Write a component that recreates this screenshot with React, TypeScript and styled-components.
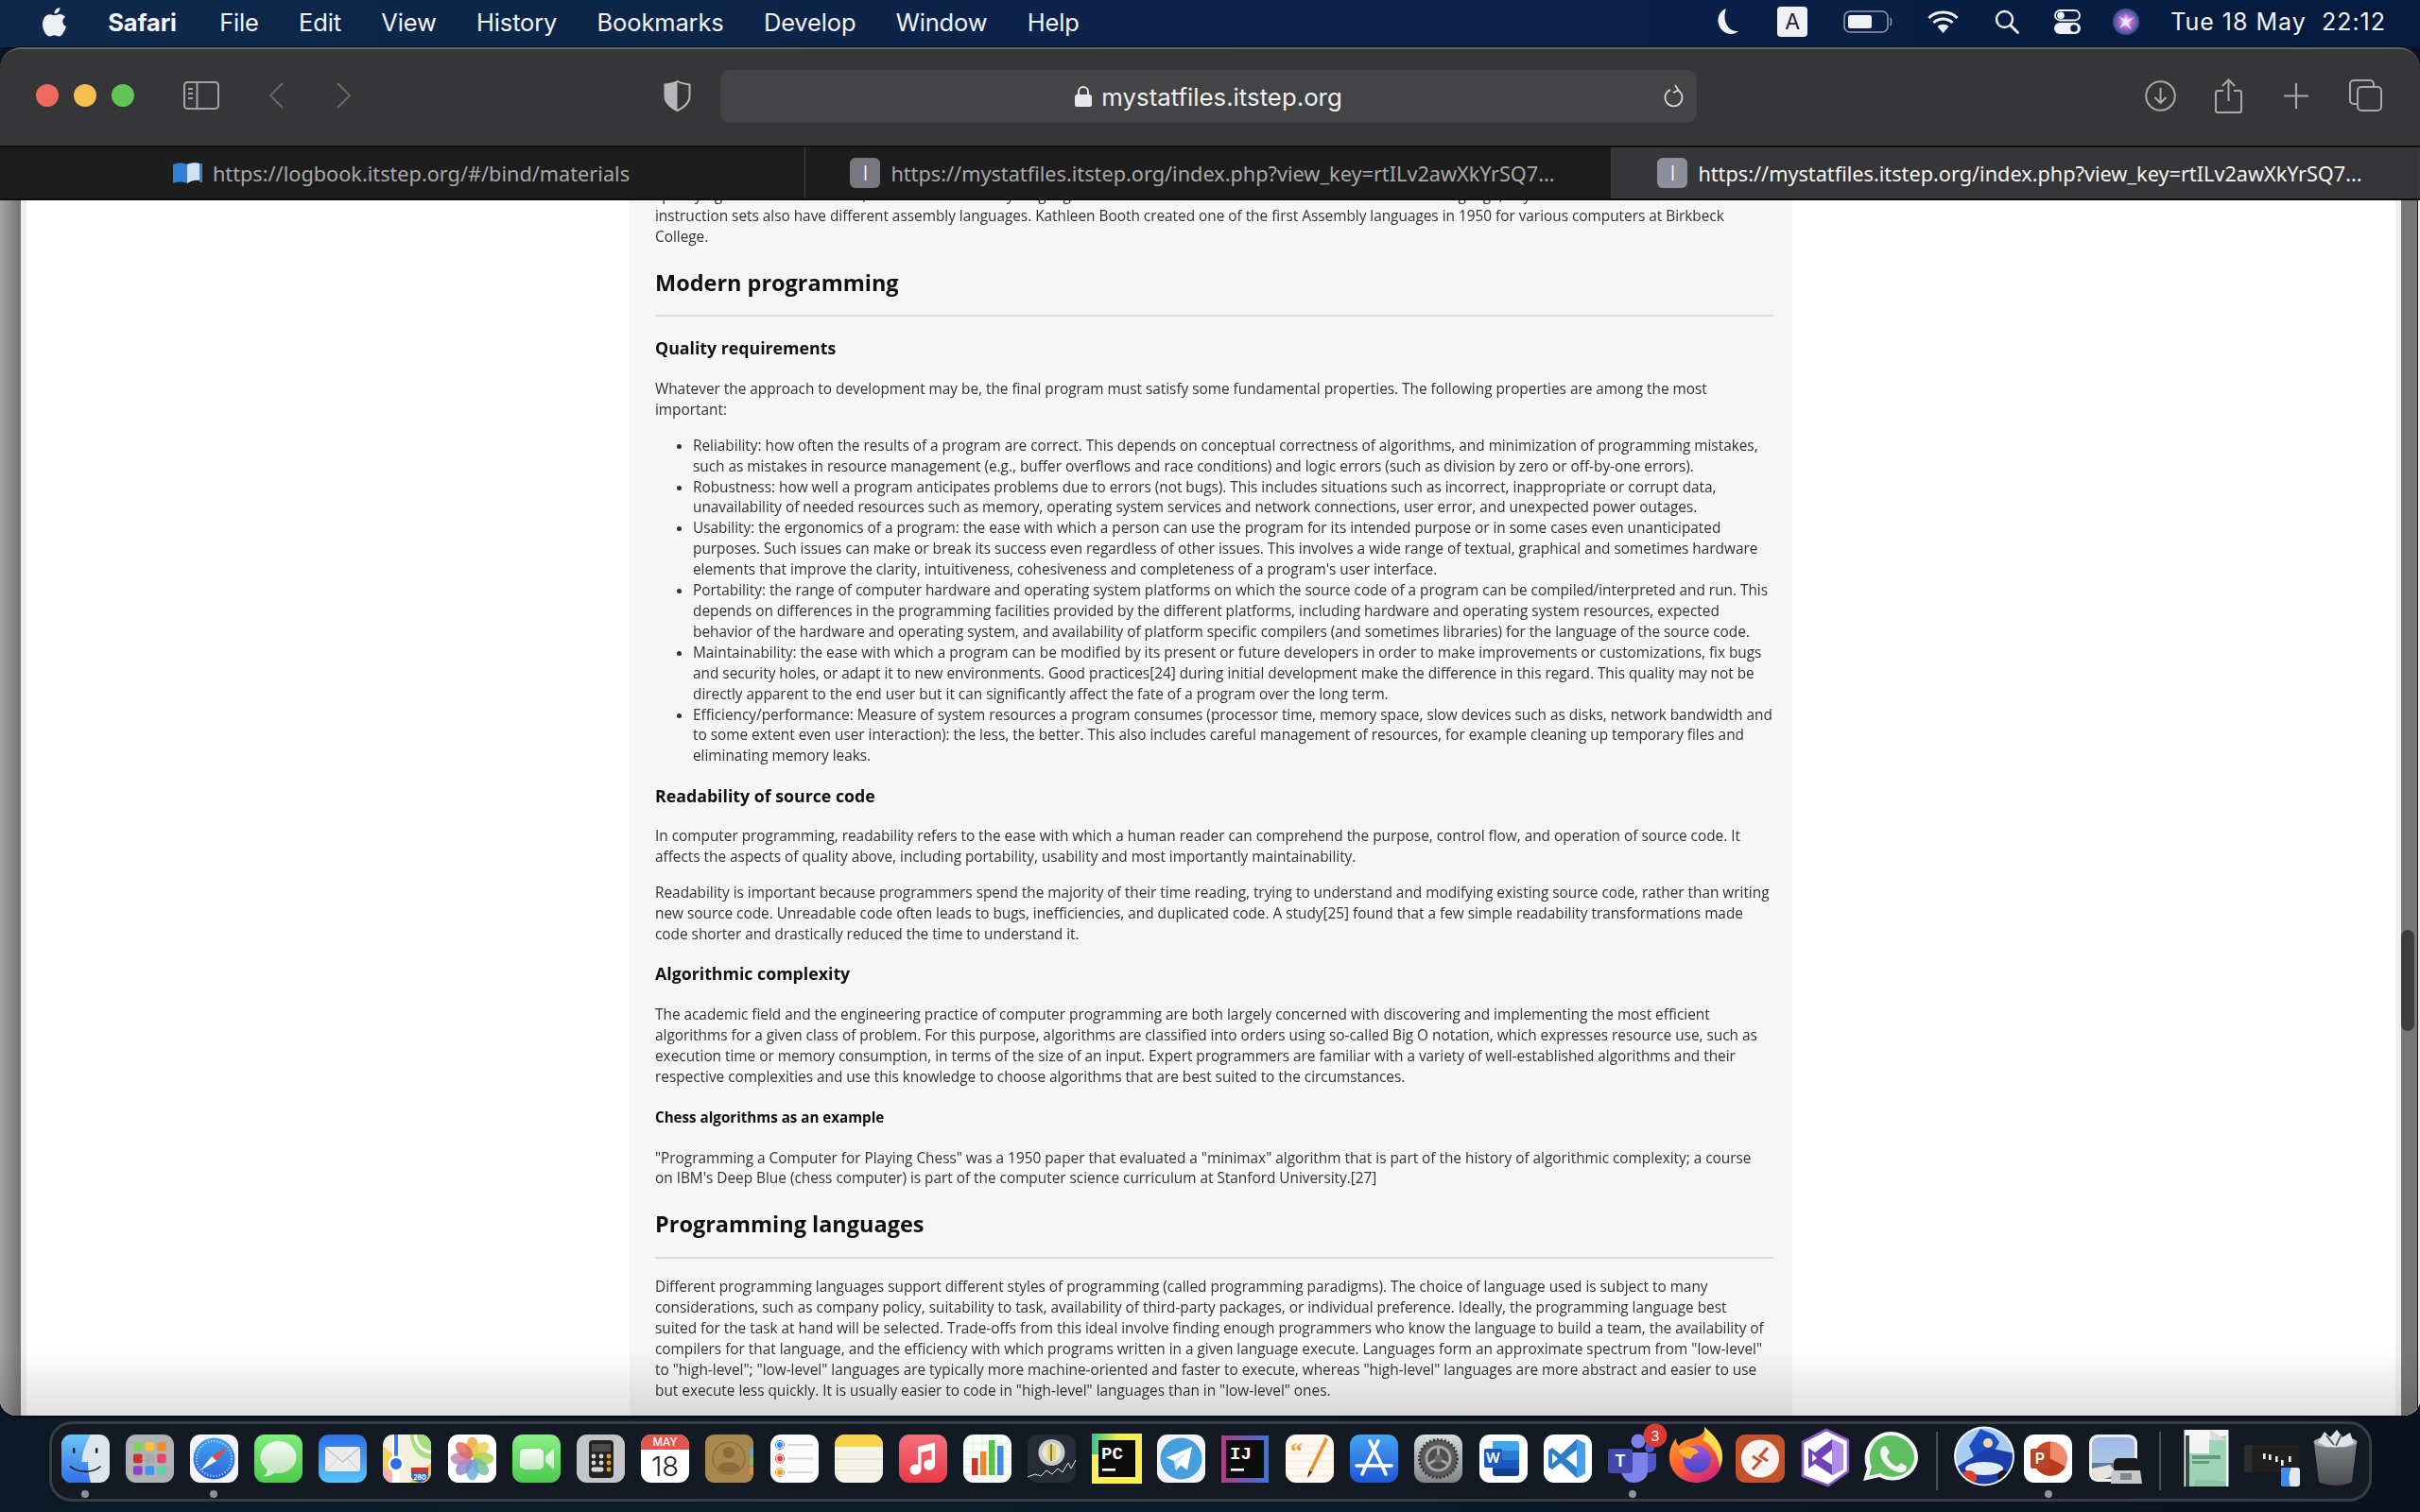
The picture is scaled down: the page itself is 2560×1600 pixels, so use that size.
import React from 'react';
import styled, { createGlobalStyle } from 'styled-components';

const Global = createGlobalStyle`
  html, body { margin: 0; padding: 0; background: #0a1521; }
  * { box-sizing: border-box; }
`;

const Screen = styled.div`
  width: 2560px; height: 1600px; overflow: hidden;
  display: flex; flex-direction: column;
  background: radial-gradient(ellipse at 30% 100%, #0d1c2b, #09131f 70%);
  font-family: Inter, "Liberation Sans", sans-serif;
`;
const MenuBar = styled.header`
  height: 50px; flex: none; display: flex; align-items: center; padding: 0 36px 4px 45px;
  background: linear-gradient(90deg, #10284c, #0b2148 60%, #051a3e);
  color: #f2f3f6; font-size: 25.5px; letter-spacing: -0.15px;
`;
const MenuLeft = styled.nav` display: flex; align-items: center; gap: 42.3px; `;
const AppName = styled.span` font-weight: 700; margin: 0 3px 0 24px; `;
const MenuItem = styled.span``;
const MenuRight = styled.div` margin-left: auto; display: flex; align-items: center; `;
const Clock = styled.span` white-space: pre; margin-left: 33px; font-size: 25px; letter-spacing: 1px; `;
const StatusIcon = styled.svg<{ $m: number }>` margin-left: ${p => p.$m}px; display: block; flex: none; `;
const InputBadge = styled.span`
  margin-left: 41px; width: 32px; height: 32px; flex: none; background: #eef0f4; border-radius: 4px;
  color: #16233d; font-size: 23px; text-align: center; line-height: 32px;
`;

const Win = styled.main`
  height: 1450px; flex: none; display: flex; flex-direction: column; overflow: hidden;
  border-radius: 22px 22px 18px 18px; border-top: 2px solid #626264; border-bottom: 2px solid #0a0a0a;
  background: #363638; box-shadow: 0 0 0 1px #101010;
`;
const Toolbar = styled.div`
  height: 102px; flex: none; display: flex; align-items: center; padding: 0 0 4px 38px; background: #363638;
`;
const Lights = styled.div` display: flex; gap: 16px; `;
const Light = styled.span<{ $c: string }>` width: 24px; height: 24px; border-radius: 50%; background: ${p => p.$c}; `;
const ToolIcon = styled.svg<{ $m: number }>` margin-left: ${p => p.$m}px; flex: none; display: block; `;
const UrlBar = styled.div`
  margin: 2px 0 0 31px; width: 1033px; height: 56px; border-radius: 11px; background: #444446;
  display: flex; align-items: center; justify-content: center; color: #f0f0f2; font-size: 25.8px; position: relative;
`;
const UrlLabel = styled.span` margin-left: 10px; `;
const Reload = styled.svg` position: absolute; right: 13px; top: 15px; `;
const TabBar = styled.div`
  height: 58px; flex: none; display: flex; background: #1d1d1e;
  border-top: 2px solid #111; border-bottom: 2px solid #0c0c0c;
`;
const Tab = styled.div<{ $w: number; $pad: number; $on?: boolean }>`
  width: ${p => p.$w}px; display: flex; align-items: center; justify-content: center; gap: 11px; padding-right: ${p => p.$pad}px;
  border-right: 1px solid #3c3c3e; font-size: 21.7px; white-space: nowrap; font-family: "Noto Sans", sans-serif;
  color: ${p => p.$on ? '#f4f4f5' : '#a8a8aa'}; background: ${p => p.$on ? '#363638' : 'transparent'};
`;
const Favicon = styled.span<{ $on?: boolean }>`
  width: 32px; height: 32px; border-radius: 6px; display: flex; align-items: center; justify-content: center;
  background: ${p => p.$on ? '#8d8e9c' : '#77777f'}; color: #fff; font-size: 21px; font-family: Inter, sans-serif; font-weight: 300;
`;
const Body = styled.div` flex: 1; display: flex; min-height: 0; position: relative; background: #fff; `;
const Gutter = styled.div` width: 22px; flex: none; background: linear-gradient(90deg, #a2a2a2, #757575); `;
const GutterEdge = styled.div` width: 6px; flex: none; background: #efefef; `;
const PageArea = styled.div` flex: 1; display: flex; justify-content: center; overflow: hidden; min-width: 0; `;
const Track = styled.div`
  width: 26px; flex: none; position: relative; display: flex;
  background: #efefef; padding-left: 6px;
`;
const TrackFill = styled.div` flex: 1; background: #777; border-right: 1px solid #1a1a1a; margin-right: 2px; `;
const Thumb = styled.div`
  position: absolute; left: 6px; top: 772px; width: 14px; height: 107px; border-radius: 7px; background: #3d3d3d;
`;
const Fade = styled.div`
  position: absolute; left: 0; right: 0; bottom: 0; height: 70px; pointer-events: none;
  background: linear-gradient(180deg, rgba(0,0,0,0), rgba(0,0,0,.12));
`;
const Panel = styled.article`
  width: 1230px; flex: none; background: #f6f6f6; padding: 0 20px 0 27px; overflow: hidden;
  font-family: "Open Sans", "Noto Sans", sans-serif; font-size: 15.4px; line-height: 21.9px; color: #323232;
  filter: blur(0.55px); white-space: nowrap; letter-spacing: -0.02px;
`;
const Scrolled = styled.div` margin-top: -16px; `;
const P = styled.p` margin: 0 0 16.2px; `;
const H2 = styled.h2`
  margin: 22px 0 19.5px; padding-bottom: 19.5px; border-bottom: 2px solid #dcdcdc;
  font-size: 23.5px; line-height: 30px; font-weight: 700; color: #111;
`;
const H3 = styled.h3<{ $first?: boolean }>`
  margin: ${p => p.$first ? 21 : 18.5}px 0 20.5px; font-size: 17.8px; line-height: 24px; font-weight: 700; color: #111;
`;
const H4 = styled.h4` margin: 19px 0 21px; font-size: 15.2px; line-height: 24px; font-weight: 700; color: #111; `;
const Ul = styled.ul` margin: 0; padding-left: 40px; `;
const Li = styled.li``;

const DockRow = styled.footer`
  margin: 4px 0 0 52px; width: 2457px; height: 85px; flex: none; display: flex; align-items: flex-start; gap: 17.2px;
  padding: 11px 0 0 9.5px; background: #131a24; border: 3px solid #383d45; border-radius: 24px;
`;
const DockItem = styled.div` width: 51px; height: 51px; flex: none; position: relative; `;
const DockSvg = styled.svg` display: block; overflow: visible; `;
const Running = styled.span`
  position: absolute; left: 21.5px; top: 59px; width: 8px; height: 8px; border-radius: 50%; background: #8f949b;
`;
const DockSep = styled.div` width: 2px; height: 62px; margin: -3px 6px 0; flex: none; background: #4a4e55; `;

const Lines = ({ t }: { t: string[] }) => <>{t.map((l, i) => <React.Fragment key={i}>{l}{i < t.length - 1 && <br />}</React.Fragment>)}</>;

const RR = ({ f, r = 11 }: { f: string; r?: number }) => <rect width="51" height="51" rx={r} fill={f} />;
const G = ({ id, a, b, c, h }: { id: string; a: string; b: string; c?: string; h?: boolean }) => (
  <linearGradient id={id} x1="0" y1="0" x2={h ? 1 : 0} y2={h ? 0 : 1}>
    <stop offset="0" stopColor={a} />{c && <stop offset=".5" stopColor={c} />}<stop offset="1" stopColor={b} />
  </linearGradient>
);

const petals = ['#f0a83a', '#e9d24a', '#a9cf57', '#6fbf9a', '#6aa7dd', '#8d86c9', '#c67fb2', '#e0655b'];
const lpad = ['#7bd84e', '#f6c33c', '#ee8e2e', '#cf2f27', '#a6aab0', '#e8476a', '#9440cf', '#3f97f2', '#5fd1ad'];

const icons: Record<string, React.ReactNode> = {
  finder: <><defs><G id="fa" a="#6cc6f8" b="#2f6fe8" /></defs><RR f="#dfe5ee" /><path d="M11 0 H31 C24 12 22 22 21.5 29 H28 C28 37 29 44 31 51 H11 A11 11 0 0 1 0 40 V11 A11 11 0 0 1 11 0Z" fill="url(#fa)" /><rect x="12" y="14" width="2.4" height="6" rx="1.2" fill="#1a1a1a" /><rect x="36" y="14" width="2.4" height="6" rx="1.2" fill="#1a1a1a" /><path d="M9.5 34 C18 41 33 41 41 34" fill="none" stroke="#111" strokeWidth="1.6" strokeLinecap="round" /></>,
  launch: <><RR f="#b1b2b6" />{lpad.map((c, i) => <rect key={i} x={8 + (i % 3) * 12.6} y={8 + Math.floor(i / 3) * 12.6} width="9.6" height="9.6" rx="2.2" fill={c} />)}</>,
  safari: <><defs><G id="sa" a="#3fa4f3" b="#2c64d6" /></defs><RR f="#f4f4f6" /><circle cx="25.5" cy="25.5" r="22" fill="url(#sa)" /><circle cx="25.5" cy="25.5" r="18.5" fill="none" stroke="#cfe3fa" strokeWidth="2" strokeDasharray="1 2.2" /><path d="M40 13 L23 23 L28 28Z" fill="#e5483e" /><path d="M11 38 L23 23 L28 28Z" fill="#f3f3f3" /></>,
  messages: <><defs><G id="ma" a="#7ff07a" b="#4cc94c" /><G id="mb" a="#f7fbf6" b="#bfe4bb" /></defs><RR f="url(#ma)" /><ellipse cx="25.5" cy="24" rx="19" ry="17" fill="url(#mb)" /><path d="M14 36 C14 40 12 43 9 44 C14 45 19 43 22 40Z" fill="#d4edd0" /></>,
  mail: <><defs><G id="la" a="#2e6fe8" b="#5ac3fb" /></defs><RR f="url(#la)" /><rect x="7" y="13" width="37" height="26" rx="2.5" fill="#ececec" /><path d="M7.5 14 L25.5 29 L43.5 14" fill="none" stroke="#b9bcc2" strokeWidth="1.2" /><path d="M8 38 L21 25 M43 38 L30 25" stroke="#c9ccd2" strokeWidth="1" /></>,
  maps: <><RR f="#f4eedd" /><path d="M29 0 H40 A11 11 0 0 1 51 11 V26 C38 26 29 14 29 0Z" fill="#a5e07e" /><path d="M34 0 C35 10 41 17 51 19" fill="none" stroke="#fff" strokeWidth="3" /><path d="M0 12 L12 22 L12 51 H11 A11 11 0 0 1 0 40Z" fill="#f6d35a" /><path d="M0 34 L12 42 V51 H11 A11 11 0 0 1 0 40Z" fill="#f2b3b8" /><path d="M28 51 L51 30 V40 A11 11 0 0 1 40 51Z" fill="#f4cf3d" /><rect x="10" y="0" width="8" height="51" fill="#fff" /><rect x="12" y="0" width="4" height="24" fill="#3b7de9" /><circle cx="14" cy="31" r="8.6" fill="#fff" /><circle cx="14" cy="31" r="6" fill="#2d6fe4" /><path d="M30 35 H48 V44 C48 48 42 50 39 51 C36 50 30 48 30 44Z" fill="#3465b6" /><rect x="30" y="35" width="18" height="5" fill="#d9352d" /><text x="39" y="48" fontSize="7" fontFamily="Inter" fontWeight="700" fill="#fff" textAnchor="middle">280</text></>,
  photos: <><RR f="#fff" />{petals.map((c, i) => <ellipse key={i} cx="25.5" cy="13.5" rx="6.6" ry="11" fill={c} opacity=".82" transform={`rotate(${i * 45} 25.5 25.5)`} />)}<circle cx="25.5" cy="25.5" r="1.2" fill="#fff" /></>,
  facetime: <><defs><G id="fta" a="#8bf088" b="#4cc84f" /><G id="ftb" a="#fafdf9" b="#c3e7bf" /></defs><RR f="url(#fta)" /><rect x="8" y="15" width="25" height="22" rx="5" fill="url(#ftb)" /><path d="M35 23 L44 15 V37 L35 29Z" fill="url(#ftb)" /></>,
  calc: <><RR f="#c3c5c8" /><rect x="13" y="6" width="26" height="40" rx="4" fill="#232323" /><rect x="16" y="10" width="20" height="8" rx="1" fill="#4b4b4b" />{[0, 1, 2, 3, 4, 5].map(i => <circle key={i} cx={18 + (i % 3) * 8} cy={23 + Math.floor(i / 3) * 7} r="2.4" fill={i % 3 === 2 ? '#f09a2e' : '#d6d6d6'} />)}<rect x="15.5" y="34.5" width="13" height="5" rx="2.5" fill="#d6d6d6" /><circle cx="34" cy="37" r="2.4" fill="#f09a2e" /></>,
  calendar: <><RR f="#fff" /><path d="M11 0 H40 A11 11 0 0 1 51 11 V16 H0 V11 A11 11 0 0 1 11 0Z" fill="#e0574d" /><text x="25.5" y="12" fontSize="11.5" fontFamily="Inter" fontWeight="500" fill="#fff" textAnchor="middle">MAY</text><text x="25.5" y="44" fontSize="29" fontFamily="Inter" fontWeight="300" fill="#222" textAnchor="middle">18</text></>,
  contacts: <><rect width="51" height="51" rx="9" fill="#a8884e" /><rect x="47" y="14" width="4" height="9" fill="#58a7d6" /><rect x="47" y="24" width="4" height="9" fill="#7bb96b" /><rect x="47" y="34" width="4" height="8" fill="#d99338" /><circle cx="25" cy="25" r="17" fill="none" stroke="#8a6d3b" strokeWidth="1.2" /><circle cx="25" cy="19" r="6" fill="#8a6d3b" /><path d="M13 36 C15 27 35 27 37 36 C31 42 19 42 13 36Z" fill="#8a6d3b" /></>,
  reminders: <><RR f="#fbfbfb" />{['#3b82f0', '#e2453c', '#ef9b2e'].map((c, i) => <React.Fragment key={i}><circle cx="10" cy={11 + i * 14.5} r="4.6" fill="none" stroke={c} strokeWidth="1" /><circle cx="10" cy={11 + i * 14.5} r="3" fill={c} /><rect x="18" y={10 + i * 14.5} width="27" height="1.8" fill="#d3d3d3" /></React.Fragment>)}</>,
  notes: <><RR f="#f6f3e9" /><path d="M11 0 H40 A11 11 0 0 1 51 11 V13 H0 V11 A11 11 0 0 1 11 0Z" fill="#f8d24a" /><path d="M0 26 H51 M0 38 H51" stroke="#dcd8ca" strokeWidth="1.2" /></>,
  music: <><defs><G id="mu" a="#f46f7e" b="#e93a49" /></defs><RR f="url(#mu)" /><path d="M20 13 L38 8.5 V32 A6 5.6 0 1 1 34.5 27 V16.5 L23.5 19 V37 A6 5.6 0 1 1 20 32Z" fill="#fff" /></>,
  numbers: <><RR f="#f8fbf7" /><path d="M0 10 H51 M0 18 H51 M0 26 H51 M0 34 H51 M0 42 H51 M10 0 V51 M20 0 V51 M30 0 V51 M40 0 V51" stroke="#d9ecd9" strokeWidth=".7" /><rect x="9" y="25" width="6.5" height="18" fill="#c8342c" /><rect x="18" y="18" width="6.5" height="25" fill="#ea8a2f" /><rect x="27" y="6" width="6.5" height="37" fill="#55c24a" /><rect x="36" y="12" width="6.5" height="31" fill="#3d8be6" /></>,
  stock: <><RR f="#262c37" /><circle cx="25.5" cy="19" r="14" fill="#c8c8c4" /><circle cx="25.5" cy="19" r="10" fill="#e6e6e0" /><path d="M21 11 H30 V27 H21Z" fill="#e9d860" /><path d="M25 10 V28" stroke="#777" strokeWidth="2" /><path d="M0 45 L8 42 L14 44 L20 38 L26 42 L32 36 L37 40 L43 30 L46 36 L51 27" fill="none" stroke="#e8e8e8" strokeWidth="1" /></>,
  pycharm: <><defs><G id="pa" a="#2fc48d" b="#ffed4f" c="#f0f04a" h /></defs><rect x="-1" y="-1" width="53" height="53" fill="#fcef50" /><rect x="-1" y="-1" width="53" height="22" fill="url(#pa)" /><rect x="6" y="6" width="39" height="39" fill="#0b0b0b" /><text x="9" y="26" fontSize="19" fontFamily="Liberation Mono" fontWeight="700" fill="#fff">PC</text><rect x="10" y="36" width="14" height="2.6" fill="#fff" /></>,
  telegram: <><RR f="#f2f2f2" /><circle cx="25.5" cy="25.5" r="22" fill="#46a0dd" /><path d="M37 13 L9.5 24.5 L18 28 L20 38 L25 32.5 L32 37.5Z" fill="#fff" /><path d="M18 28 L33 17 L22 29.5 L20 38Z" fill="#cfe3f3" /></>,
  idea: <><defs><G id="ib" a="#b13c7e" b="#3873e6" h /></defs><rect y="1" width="50" height="50" fill="url(#ib)" /><rect x="5" y="6" width="40" height="40" fill="#0b0b0b" /><text x="9" y="26" fontSize="19" fontFamily="Liberation Mono" fontWeight="700" fill="#fff">IJ</text><rect x="10" y="36" width="14" height="2.6" fill="#fff" /></>,
  pages: <><RR f="#fdf8ef" /><path d="M0 12 H51 M0 20 H51 M0 28 H51 M0 36 H51 M0 44 H51" stroke="#f6dcc5" strokeWidth=".8" /><text x="5" y="26" fontSize="26" fontFamily="Liberation Serif" fontWeight="700" fill="#f0983c">“</text><path d="M42 3 L45 5 L28 40 L23 46 L25 38Z" fill="#e8922d" /><path d="M28 40 L23 46 L25 38Z" fill="#333" /></>,
  appstore: <><defs><G id="aa" a="#46a6f3" b="#1f55d4" /></defs><RR f="url(#aa)" /><path d="M30 7 L17 33 M21 7 L34 33 M7 33 H44 M13 42 L17 33 M38 42 L34 33" stroke="#fff" strokeWidth="3.6" strokeLinecap="round" fill="none" /></>,
  settings: <><defs><G id="se" a="#d5dee0" b="#828486" /></defs><RR f="url(#se)" /><circle cx="25.5" cy="25.5" r="20" fill="#5a5a5c" /><circle cx="25.5" cy="25.5" r="20" fill="none" stroke="#39393a" strokeWidth="3" strokeDasharray="2 2" /><circle cx="25.5" cy="25.5" r="14" fill="#a4a5a7" /><circle cx="25.5" cy="25.5" r="11" fill="#4d4d4f" /><path d="M25.5 25.5 V14 M25.5 25.5 L35.5 31 M25.5 25.5 L15.5 31" stroke="#a4a5a7" strokeWidth="3" /><circle cx="25.5" cy="25.5" r="4" fill="#6a6a6c" /></>,
  word: <><RR f="#fff" /><path d="M14 7 H39 A3 3 0 0 1 42 10 V17 H14Z" fill="#41a5ee" /><rect x="14" y="17" width="28" height="10" fill="#2b7cd3" /><rect x="14" y="27" width="28" height="9" fill="#185abd" /><path d="M14 36 H42 V41 A3 3 0 0 1 39 44 H17 A3 3 0 0 1 14 41Z" fill="#103f91" /><rect x="5" y="15" width="19" height="20" rx="2" fill="#185abd" /><text x="14.5" y="30" fontSize="15" fontFamily="Inter" fontWeight="600" fill="#fff" textAnchor="middle">W</text></>,
  vscode: <><RR f="#fff" /><path d="M35 5 L44 9.5 V41 L35 46 L18 30 L9 37 L5 34.5 V16.5 L9 14 L18 21Z M35 16 L23.5 25.5 L35 35Z M9 20 V31 L15 25.5Z" fill="#2f7fc7" fillRule="evenodd" /><path d="M35 5 L44 9.5 V41 L35 46Z" fill="#4a9fe8" /></>,
  teams: <><circle cx="32" cy="7" r="7.5" fill="#7b83eb" /><circle cx="44" cy="14" r="5" fill="#5059c9" /><path d="M38 20 H51 V33 C51 38 46 41 42 40Z" fill="#5059c9" /><path d="M14 19 H42 V39 C42 47 34 51 27 51 C20 51 16 46 14 40Z" fill="#7b83eb" /><rect x="0" y="15" width="26" height="26" rx="3" fill="#4348ae" /><text x="13" y="34" fontSize="17" fontFamily="Inter" fontWeight="700" fill="#fff" textAnchor="middle">T</text><circle cx="50" cy="1" r="12.5" fill="#d93c35" /><text x="50" y="6.5" fontSize="15" fontFamily="Inter" fill="#fff" textAnchor="middle">3</text></>,
  firefox: <><defs><linearGradient id="ff" x1="0" y1="0" x2=".7" y2="1"><stop offset="0" stopColor="#ffb52e" /><stop offset=".5" stopColor="#fb6a2a" /><stop offset="1" stopColor="#d3247e" /></linearGradient><G id="fg" a="#a855d8" b="#3f45c8" /></defs><path d="M34 -8 C40 -2 52 6 53 22 C54 42 40 51 25 51 C10 51 -3 40 -3 24 C-3 14 1 8 4 4 C4 8 5 10 7 12 C10 7 16 5 22 4 C30 2 35 -2 34 -8Z" fill="url(#ff)" /><path d="M34 -8 C40 -2 52 6 53 22 C53 28 52 32 50 35 C50 20 38 8 32 6 C35 2 35 -3 34 -8Z" fill="#fddb4e" /><circle cx="26" cy="26" r="14.5" fill="url(#fg)" /><path d="M12 14 C18 12 26 14 28 19 C24 21 20 22 20 26 C15 26 9 22 6 17Z" fill="#ffab30" /></>,
  remote: <><rect x="-1" y="0" width="52" height="51" rx="10" fill="#c4522d" /><circle cx="25" cy="25.5" r="20" fill="#f7f4f2" /><path d="M33 14 L25 23 L33 28 M17 23 L25 28 L17 37" fill="none" stroke="#c4522d" strokeWidth="3" /></>,
  vs: <><path d="M26 -5 L49 6 V39 L28 54 L1 44 V8Z" fill="#fff" stroke="#8a5cc7" strokeWidth="2.6" strokeLinejoin="round" /><path d="M32 5 L44 11 V37 L32 43 L14 31 L7 36 V14 L14 19Z M32 16 L21 25 L32 32Z M11 20 V29 L16 25Z" fill="#6f42b8" fillRule="evenodd" /><path d="M32 5 L44 11 V37 L32 43Z" fill="#b18de8" /></>,
  whatsapp: <><path d="M-3 49 L1 36 C-7 18 7 -3 26 -3 C42 -3 55 10 55 24 C55 42 34 55 14 45Z" fill="#f3f3f3" /><path d="M3 44 L6 34 C-1 19 10 1 26 1 C40 1 51 12 51 24 C51 39 33 51 15 41Z" fill="#5fbd62" /><path d="M17 13 L21 12 L25 19 L22 23 C24 28 28 32 33 34 L37 30 L43 34 L42 38 C38 42 30 40 23 34 C16 28 13 19 17 13Z" fill="#f3f3f3" /></>,
  sonic: <><defs><clipPath id="so"><ellipse cx="26" cy="23" rx="30" ry="29.5" /></clipPath></defs><ellipse cx="26" cy="23" rx="32" ry="31.5" fill="#f5f5f5" /><g clipPath="url(#so)"><rect x="-6" y="-8" width="64" height="62" fill="#a9cdf2" /><path d="M10 12 L22 -6 L36 0 L42 8 L34 22 L16 26Z" fill="#1c50c4" /><circle cx="30" cy="9" r="5" fill="#f0d9b0" /><path d="M-6 36 L30 14 L58 20 L58 54 L-6 54Z" fill="#1d3ea8" /><ellipse cx="26" cy="36" rx="20" ry="7" fill="#e5ebf4" /><circle cx="10" cy="46" r="8" fill="#d8452a" /><circle cx="46" cy="44" r="6" fill="#1a1a1a" /></g></>,
  ppt: <><RR f="#fff" r={11} /><circle cx="28" cy="25.5" r="18" fill="#ee8d6e" /><path d="M28 25.5 V7.5 A18 18 0 0 0 11 31 Z" fill="#d04a28" /><path d="M28 25.5 H10 A18 18 0 0 0 44 34Z" fill="#b63c1c" /><rect x="7" y="15" width="20" height="21" rx="2" fill="#b7472a" /><text x="17" y="31" fontSize="16" fontFamily="Inter" fontWeight="600" fill="#fff" textAnchor="middle">P</text></>,
  preview: <><defs><G id="pv" a="#9db9e6" b="#b8cfe6" /></defs><rect x="0" y="0" width="51" height="50" rx="9" fill="#eee" /><rect x="3" y="3" width="45" height="44" rx="7" fill="url(#pv)" /><path d="M3 30 H48 V40 A7 7 0 0 1 41 47 H10 A7 7 0 0 1 3 40Z" fill="#5a7d9e" /><path d="M3 36 L22 32 L30 42 L16 47 H10 A7 7 0 0 1 3 40Z" fill="#e8e4dc" /><rect x="26" y="25" width="27" height="15" rx="5" fill="#1b1b1b" /><path d="M24 38 H54 L56 52 H23Z" fill="#c6c8ca" /><rect x="33" y="41" width="12" height="7" fill="#7a8793" /></>,
  doc: <><rect x="1.5" y="-5" width="47" height="60" fill="#f5f5f5" /><rect x="3" y="1" width="4" height="54" fill="#3e4a44" /><path d="M7 5 H30 L46 1 V55 H7Z" fill="#9fd3b6" /><path d="M7 5 H28 V20 H7Z" fill="#f3f3f3" /><path d="M29 -5 L46 6 L29 6Z" fill="#dcdcdc" /><rect x="10" y="22" width="30" height="4" fill="#5f9e7d" /><rect x="10" y="28" width="18" height="3" fill="#5f9e7d" /><path d="M12 48 H32 L46 50 V55 H12Z" fill="#8cc5a6" /></>,
  folder: <><rect x="-3" y="11" width="58" height="29" fill="#1f1f20" /><rect x="-3" y="11" width="8" height="29" fill="#2d2d2e" />{[[17, 20], [23, 21], [30, 23], [36, 27], [44, 23]].map((p, i) => <rect key={i} x={p[0]} y={p[1]} width="2.600" height="6" fill="#eee" />)}<rect x="36" y="35" width="20" height="20" rx="3" fill="#e5e9ef" /><path d="M39 35 H47 C44 41 44 48 46 55 H39 A3 3 0 0 1 36 52 V38 A3 3 0 0 1 39 35Z" fill="#3c8bef" /></>,
  trash: <><defs><G id="tr" a="#7f8083" b="#4a4b4d" /></defs><path d="M3 9 H48 L43 50 C36 55 15 55 8 50Z" fill="url(#tr)" /><ellipse cx="25.500" cy="8" rx="23" ry="6" fill="#a9acb2" /><path d="M7 8 L14 -3 L20 3 L27 -5 L33 3 L41 -2 L45 9 L36 13 L16 13Z" fill="#dfe3ea" /><path d="M16 1 L24 11 M32 0 L26 12" stroke="#5a5c60" strokeWidth="2" /></>,
};

const dock1 = ['finder', 'launch', 'safari', 'messages', 'mail', 'maps', 'photos', 'facetime', 'calc', 'calendar', 'contacts', 'reminders', 'notes', 'music', 'numbers', 'stock', 'pycharm', 'telegram', 'idea', 'pages', 'appstore', 'settings', 'word', 'vscode', 'teams', 'firefox', 'remote', 'vs', 'whatsapp'];
const dock2 = ['sonic', 'ppt', 'preview'];
const dock3 = ['doc', 'folder', 'trash'];
const running = new Set(['finder', 'safari', 'teams', 'ppt']);

const renderDock = (names: string[]) => names.map(n => (
  <DockItem key={n}>
    <DockSvg width="51" height="51" viewBox="0 0 51 51">{icons[n]}</DockSvg>
    {running.has(n) && <Running />}
  </DockItem>
));

const menu = ['File', 'Edit', 'View', 'History', 'Bookmarks', 'Develop', 'Window', 'Help'];

export default function App() {
  return (
    <Screen>
      <Global />
      <MenuBar>
        <MenuLeft>
          <StatusIcon $m={0} width="25" height="31" viewBox="0 0 25 31" style={{ marginRight: -22 }}>
            <path d="M18.5 0 C18.7 3.2 16 6.6 12.6 6.5 C12.2 3.3 15.1 0.3 18.5 0Z M12.5 8.2 C14.2 8.2 15.8 6.9 18.3 6.9 C20.5 6.9 22.6 8 24 10 C20 12.3 20.7 18.4 25 20.2 C23.7 23.8 20.8 30.5 17.6 30.5 C15.5 30.5 14.8 29.2 12.5 29.2 C10.1 29.2 9.3 30.5 7.3 30.5 C3.7 30.5 0 23.4 0 17.6 C0 11.4 3.8 7.2 7.6 7.2 C9.6 7.2 11 8.2 12.5 8.2Z" fill="#eceef2" />
          </StatusIcon>
          <AppName>Safari</AppName>
          {menu.map(m => <MenuItem key={m}>{m}</MenuItem>)}
        </MenuLeft>
        <MenuRight>
          <StatusIcon $m={0} width="26" height="30" viewBox="0 0 26 30"><path d="M13 1 C6 4 4 10 4.500 15 C5.500 23 12 28 18 28 C21 28 24 27 26 25 C16 26 8 15 13 1Z" fill="#f0f1f4" /></StatusIcon>
          <InputBadge>A</InputBadge>
          <StatusIcon $m={38} width="52" height="24" viewBox="0 0 52 24"><rect x="1" y="1" width="46" height="22" rx="6" fill="none" stroke="#8d97ab" strokeWidth="1.6" /><rect x="5" y="5" width="25" height="14" rx="2.500" fill="#eef0f4" /><path d="M49.500 8 C51 9 51 15 49.500 16" fill="none" stroke="#8d97ab" strokeWidth="1.6" /></StatusIcon>
          <StatusIcon $m={37} width="33" height="24" viewBox="0 0 33 24"><path d="M1.500 8 C9 0 24 0 31.500 8 M6.500 13 C12 7.500 21 7.500 26.500 13" fill="none" stroke="#f0f1f4" strokeWidth="3" /><path d="M10.500 17 C14 14 19 14 22.500 17 L16.500 24Z" fill="#f0f1f4" /></StatusIcon>
          <StatusIcon $m={38} width="26" height="26" viewBox="0 0 26 26"><circle cx="10.500" cy="10.500" r="8.500" fill="none" stroke="#f0f1f4" strokeWidth="2.400" /><path d="M17 17 L24.500 24.500" stroke="#f0f1f4" strokeWidth="2.800" strokeLinecap="round" /></StatusIcon>
          <StatusIcon $m={37} width="28" height="26" viewBox="0 0 28 26"><rect x="1" y="1" width="26" height="10.500" rx="5.200" fill="none" stroke="#f0f1f4" strokeWidth="1.800" /><circle cx="7" cy="6.200" r="3.800" fill="#f0f1f4" /><rect x="0" y="14" width="28" height="12" rx="6" fill="#f0f1f4" /><circle cx="21" cy="20" r="3.800" fill="#0b2148" /></StatusIcon>
          <StatusIcon $m={34} width="28" height="28" viewBox="0 0 28 28"><defs><radialGradient id="si"><stop offset="0" stopColor="#fff" /><stop offset=".45" stopColor="#b96ad8" /><stop offset="1" stopColor="#2d4f8c" /></radialGradient></defs><circle cx="14" cy="14" r="14" fill="url(#si)" /><path d="M14 5 L15 12 L23 9 L16 15 L20 23 L13.500 17 L7 21 L11.500 14 L6 8 L13 12Z" fill="#e8f2ff" opacity=".85" /></StatusIcon>
          <Clock>{'Tue 18 May  22:12'}</Clock>
        </MenuRight>
      </MenuBar>

      <Win>
        <Toolbar>
          <Lights><Light $c="#ee6a5f" /><Light $c="#f5bf4f" /><Light $c="#62c554" /></Lights>
          <ToolIcon $m={52} width="38" height="30" viewBox="0 0 38 30"><rect x="1" y="1" width="36" height="28" rx="3.500" fill="none" stroke="#a3a3a5" strokeWidth="2" /><path d="M14.500 1 V29" stroke="#a3a3a5" strokeWidth="2" /><path d="M5 8 H10 M5 13 H10 M5 18 H10" stroke="#a3a3a5" strokeWidth="2" /></ToolIcon>
          <ToolIcon $m={52} width="17" height="28" viewBox="0 0 17 28"><path d="M15 1 L2 14 L15 27" fill="none" stroke="#666668" strokeWidth="2.200" /></ToolIcon>
          <ToolIcon $m={54} width="17" height="28" viewBox="0 0 17 28"><path d="M2 1 L15 14 L2 27" fill="none" stroke="#666668" strokeWidth="2.200" /></ToolIcon>
          <ToolIcon $m={330} width="29" height="33" viewBox="0 0 29 33"><path d="M14.500 1 C19 3.500 23 4 27.500 4.500 V17 C27.500 24 20 29.500 14.500 32 C9 29.500 1.500 24 1.500 17 V4.500 C6 4 10 3.500 14.500 1Z" fill="none" stroke="#b7b7b9" strokeWidth="2" /><path d="M14.500 1 C10 3.500 6 4 1.500 4.500 V17 C1.500 24 9 29.500 14.500 32Z" fill="#b7b7b9" /></ToolIcon>
          <UrlBar>
            <svg width="18" height="22" viewBox="0 0 18 22"><rect y="9" width="18" height="13" rx="2.500" fill="#e8e8ea" /><path d="M4 9 V6 A5 5 0 0 1 14 6 V9" fill="none" stroke="#e8e8ea" strokeWidth="2" /></svg>
            <UrlLabel>mystatfiles.itstep.org</UrlLabel>
            <Reload width="22" height="26" viewBox="0 0 22 26"><path d="M15 6.500 A9 9 0 1 1 7 6" fill="none" stroke="#d5d5d7" strokeWidth="1.800" /><path d="M12 1 L15.500 6.500 L10 9" fill="none" stroke="#d5d5d7" strokeWidth="1.800" /></Reload>
          </UrlBar>
          <ToolIcon $m={474} width="33" height="33" viewBox="0 0 33 33"><circle cx="16.500" cy="16.500" r="15.300" fill="none" stroke="#a9a9ab" strokeWidth="2" /><path d="M16.500 8 V24 M10.500 18 L16.500 24 L22.500 18" fill="none" stroke="#a9a9ab" strokeWidth="2" /></ToolIcon>
          <ToolIcon $m={41} width="29" height="37" viewBox="0 0 29 37"><path d="M9 13 H3 A2 2 0 0 0 1 15 V34 A2 2 0 0 0 3 36 H26 A2 2 0 0 0 28 34 V15 A2 2 0 0 0 26 13 H20" fill="none" stroke="#a9a9ab" strokeWidth="2" /><path d="M14.500 24 V2 M8 8 L14.500 1.500 L21 8" fill="none" stroke="#a9a9ab" strokeWidth="2" /></ToolIcon>
          <ToolIcon $m={44} width="26" height="27" viewBox="0 0 26 27"><path d="M13 0 V27 M0 13.500 H26" stroke="#a9a9ab" strokeWidth="2.200" /></ToolIcon>
          <ToolIcon $m={43} width="35" height="34" viewBox="0 0 35 34"><rect x="9" y="8" width="25" height="25" rx="4" fill="#363638" stroke="#a9a9ab" strokeWidth="2" /><path d="M9 26 H5 A4 4 0 0 1 1 22 V5 A4 4 0 0 1 5 1 H22 A4 4 0 0 1 26 5 V8" fill="none" stroke="#a9a9ab" strokeWidth="2" /></ToolIcon>
        </Toolbar>
        <TabBar>
          <Tab $w={852} $pad={2}>
            <svg width="31" height="22" viewBox="0 0 31 22"><path d="M0 2 C5 0 11 0 15 2 V22 C11 20 5 20 0 22Z" fill="#2f7fd6" /><path d="M15 2 C19 0 25 0 28 1 V19 C24 18 19 19 15 22Z" fill="#cfe2f5" /><path d="M28 1 H31 V21 H28Z" fill="#2f7fd6" /></svg>
            https://logbook.itstep.org/#/bind/materials
          </Tab>
          <Tab $w={853} $pad={12}><Favicon>I</Favicon>https://mystatfiles.itstep.org/index.php?view_key=rtILv2awXkYrSQ7...</Tab>
          <Tab $w={855} $pad={12} $on><Favicon $on>I</Favicon>https://mystatfiles.itstep.org/index.php?view_key=rtILv2awXkYrSQ7...</Tab>
        </TabBar>
        <Body>
          <Gutter />
          <GutterEdge />
          <PageArea>
            <Panel>
              <Scrolled>
                <P><Lines t={[
                  'specifying addresses. However, because an assembly language is little more than a different notation for a machine language, any two machines with different',
                  'instruction sets also have different assembly languages. Kathleen Booth created one of the first Assembly languages in 1950 for various computers at Birkbeck',
                  'College.']} /></P>
                <H2>Modern programming</H2>
                <H3 $first>Quality requirements</H3>
                <P><Lines t={[
                  'Whatever the approach to development may be, the final program must satisfy some fundamental properties. The following properties are among the most',
                  'important:']} /></P>
                <Ul>
                  <Li><Lines t={['Reliability: how often the results of a program are correct. This depends on conceptual correctness of algorithms, and minimization of programming mistakes,', 'such as mistakes in resource management (e.g., buffer overflows and race conditions) and logic errors (such as division by zero or off-by-one errors).']} /></Li>
                  <Li><Lines t={['Robustness: how well a program anticipates problems due to errors (not bugs). This includes situations such as incorrect, inappropriate or corrupt data,', 'unavailability of needed resources such as memory, operating system services and network connections, user error, and unexpected power outages.']} /></Li>
                  <Li><Lines t={['Usability: the ergonomics of a program: the ease with which a person can use the program for its intended purpose or in some cases even unanticipated', 'purposes. Such issues can make or break its success even regardless of other issues. This involves a wide range of textual, graphical and sometimes hardware', "elements that improve the clarity, intuitiveness, cohesiveness and completeness of a program's user interface."]} /></Li>
                  <Li><Lines t={['Portability: the range of computer hardware and operating system platforms on which the source code of a program can be compiled/interpreted and run. This', 'depends on differences in the programming facilities provided by the different platforms, including hardware and operating system resources, expected', 'behavior of the hardware and operating system, and availability of platform specific compilers (and sometimes libraries) for the language of the source code.']} /></Li>
                  <Li><Lines t={['Maintainability: the ease with which a program can be modified by its present or future developers in order to make improvements or customizations, fix bugs', 'and security holes, or adapt it to new environments. Good practices[24] during initial development make the difference in this regard. This quality may not be', 'directly apparent to the end user but it can significantly affect the fate of a program over the long term.']} /></Li>
                  <Li><Lines t={['Efficiency/performance: Measure of system resources a program consumes (processor time, memory space, slow devices such as disks, network bandwidth and', 'to some extent even user interaction): the less, the better. This also includes careful management of resources, for example cleaning up temporary files and', 'eliminating memory leaks.']} /></Li>
                </Ul>
                <H3>Readability of source code</H3>
                <P><Lines t={['In computer programming, readability refers to the ease with which a human reader can comprehend the purpose, control flow, and operation of source code. It', 'affects the aspects of quality above, including portability, usability and most importantly maintainability.']} /></P>
                <P><Lines t={['Readability is important because programmers spend the majority of their time reading, trying to understand and modifying existing source code, rather than writing', 'new source code. Unreadable code often leads to bugs, inefficiencies, and duplicated code. A study[25] found that a few simple readability transformations made', 'code shorter and drastically reduced the time to understand it.']} /></P>
                <H3>Algorithmic complexity</H3>
                <P><Lines t={['The academic field and the engineering practice of computer programming are both largely concerned with discovering and implementing the most efficient', 'algorithms for a given class of problem. For this purpose, algorithms are classified into orders using so-called Big O notation, which expresses resource use, such as', 'execution time or memory consumption, in terms of the size of an input. Expert programmers are familiar with a variety of well-established algorithms and their', 'respective complexities and use this knowledge to choose algorithms that are best suited to the circumstances.']} /></P>
                <H4>Chess algorithms as an example</H4>
                <P><Lines t={['"Programming a Computer for Playing Chess" was a 1950 paper that evaluated a "minimax" algorithm that is part of the history of algorithmic complexity; a course', "on IBM's Deep Blue (chess computer) is part of the computer science curriculum at Stanford University.[27]"]} /></P>
                <H2>Programming languages</H2>
                <P><Lines t={['Different programming languages support different styles of programming (called programming paradigms). The choice of language used is subject to many', 'considerations, such as company policy, suitability to task, availability of third-party packages, or individual preference. Ideally, the programming language best', 'suited for the task at hand will be selected. Trade-offs from this ideal involve finding enough programmers who know the language to build a team, the availability of', 'compilers for that language, and the efficiency with which programs written in a given language execute. Languages form an approximate spectrum from "low-level"', 'to "high-level"; "low-level" languages are typically more machine-oriented and faster to execute, whereas "high-level" languages are more abstract and easier to use', 'but execute less quickly. It is usually easier to code in "high-level" languages than in "low-level" ones.']} /></P>
              </Scrolled>
            </Panel>
          </PageArea>
          <Track><TrackFill /><Thumb /></Track>
          <Fade />
        </Body>
      </Win>

      <DockRow>
        {renderDock(dock1)}
        <DockSep />
        {renderDock(dock2)}
        <DockSep />
        {renderDock(dock3)}
      </DockRow>
    </Screen>
  );
}
